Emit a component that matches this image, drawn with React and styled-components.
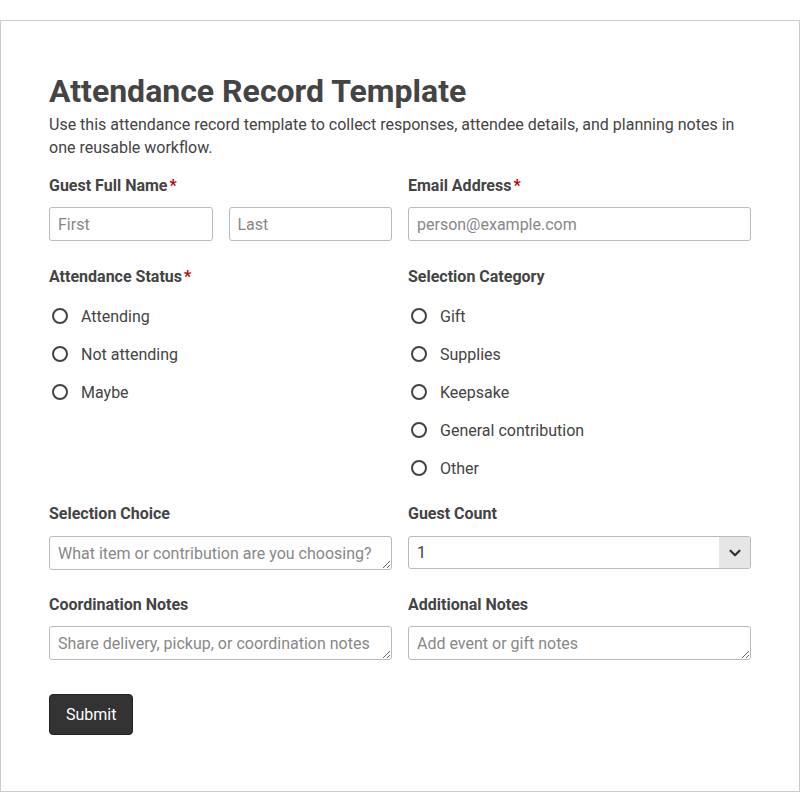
import React from "react";
import styled, { createGlobalStyle } from "styled-components";
import { ChevronDown } from "lucide-react";

const GlobalStyle = createGlobalStyle`
  body {
    margin: 0;
    background: #fff;
    font-family: Roboto, "Liberation Sans", sans-serif;
    color: #444;
  }
`;

const Page = styled.div`
  margin-top: 20px;
  border: 1px solid #ccc;
  padding: 48px 48px 56px;
`;

const Title = styled.h1`
  margin: 0;
  font-size: 32px;
  line-height: 44px;
  font-weight: 700;
  color: #444;
`;

const Intro = styled.p`
  margin: 0 0 16px;
  font-size: 16px;
  line-height: 23px;
  color: #444;
`;

const Grid = styled.div`
  display: grid;
  grid-template-columns: 1fr 1fr;
  column-gap: 16px;
  row-gap: 25px;
`;

const Field = styled.div`
  display: flex;
  flex-direction: column;
  gap: ${({ $gap }) => $gap || 10}px;
  margin-top: ${({ $shift }) => $shift || 0}px;
`;

const Label = styled.label`
  font-size: 16px;
  line-height: 22px;
  font-weight: 700;
  color: #444;
`;

const Req = styled.span`
  color: #b00;
  margin-left: 2px;
`;

const Pair = styled.div`
  display: grid;
  grid-template-columns: 1fr 1fr;
  gap: 16px;
`;

const TextInput = styled.input`
  box-sizing: border-box;
  width: 100%;
  height: 34px;
  margin: 0;
  border: 1px solid #bbb;
  border-radius: 3px;
  padding: 0 8px;
  font: 16px Roboto, "Liberation Sans", sans-serif;
  color: #444;
  &::placeholder {
    color: #888;
  }
`;

const Area = styled.textarea`
  box-sizing: border-box;
  display: block;
  width: 100%;
  height: 34px;
  margin: 0;
  border: 1px solid #bbb;
  border-radius: 3px;
  padding: 7px 8px 5px;
  font: 16px/20px Roboto, "Liberation Sans", sans-serif;
  color: #444;
  overflow: hidden;
  &::placeholder {
    color: #888;
  }
`;

const Options = styled.div`
  display: flex;
  flex-direction: column;
  margin-top: -1px;
  margin-bottom: -9px;
`;

const Option = styled.label`
  display: flex;
  align-items: center;
  gap: 13px;
  height: 38px;
  padding-left: 3px;
  font-size: 16px;
  color: #444;
`;

const Radio = styled.input.attrs({ type: "radio" })`
  appearance: none;
  box-sizing: border-box;
  width: 16px;
  height: 16px;
  margin: 0;
  border: 2px solid #444;
  border-radius: 50%;
  background: #fff;
`;

const SelectWrap = styled.div`
  position: relative;
`;

const Select = styled.select`
  appearance: none;
  box-sizing: border-box;
  width: 100%;
  height: 33px;
  margin: 0;
  border: 1px solid #bbb;
  border-radius: 3px;
  padding: 0 40px 0 8px;
  background: #fff;
  font: 16px Roboto, "Liberation Sans", sans-serif;
  color: #444;
`;

const Arrow = styled.span`
  position: absolute;
  top: 1px;
  right: 1px;
  bottom: 1px;
  width: 31px;
  display: flex;
  align-items: center;
  justify-content: center;
  background: #e6e6e6;
  border-radius: 0 2px 2px 0;
  color: #333;
  pointer-events: none;
`;

const Submit = styled.button`
  margin-top: 34px;
  height: 41px;
  padding: 0 16px;
  background: #333;
  border: 1px solid #222;
  border-radius: 4px;
  color: #fff;
  font: 16px Roboto, "Liberation Sans", sans-serif;
`;

const attendance = ["Attending", "Not attending", "Maybe"];
const categories = ["Gift", "Supplies", "Keepsake", "General contribution", "Other"];

export default function App() {
  return (
    <>
      <GlobalStyle />
      <Page>
        <Title>Attendance Record Template</Title>
        <Intro>
          Use this attendance record template to collect responses, attendee details, and
          planning notes in one reusable workflow.
        </Intro>
        <form onSubmit={(e) => e.preventDefault()}>
          <Grid>
            <Field>
              <Label>
                Guest Full Name<Req>*</Req>
              </Label>
              <Pair>
                <TextInput placeholder="First" />
                <TextInput placeholder="Last" />
              </Pair>
            </Field>
            <Field>
              <Label>
                Email Address<Req>*</Req>
              </Label>
              <TextInput type="email" placeholder="person@example.com" />
            </Field>

            <Field>
              <Label>
                Attendance Status<Req>*</Req>
              </Label>
              <Options>
                {attendance.map((a) => (
                  <Option key={a}>
                    <Radio name="attendance" value={a} />
                    {a}
                  </Option>
                ))}
              </Options>
            </Field>
            <Field>
              <Label>Selection Category</Label>
              <Options>
                {categories.map((c) => (
                  <Option key={c}>
                    <Radio name="category" value={c} />
                    {c}
                  </Option>
                ))}
              </Options>
            </Field>

            <Field $gap={11}>
              <Label>Selection Choice</Label>
              <Area rows={1} placeholder="What item or contribution are you choosing?" />
            </Field>
            <Field $gap={11}>
              <Label>Guest Count</Label>
              <SelectWrap>
                <Select defaultValue="1">
                  {[1, 2, 3, 4, 5].map((n) => (
                    <option key={n}>{n}</option>
                  ))}
                </Select>
                <Arrow>
                  <ChevronDown size={18} strokeWidth={3} />
                </Arrow>
              </SelectWrap>
            </Field>

            <Field $shift={-1}>
              <Label>Coordination Notes</Label>
              <Area rows={1} placeholder="Share delivery, pickup, or coordination notes" />
            </Field>
            <Field $shift={-1}>
              <Label>Additional Notes</Label>
              <Area rows={1} placeholder="Add event or gift notes" />
            </Field>
          </Grid>
          <Submit type="submit">Submit</Submit>
        </form>
      </Page>
    </>
  );
}
